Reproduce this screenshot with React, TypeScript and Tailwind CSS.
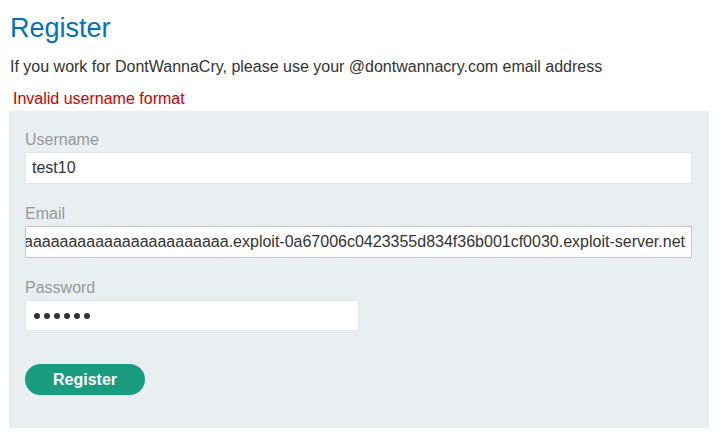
import React from 'react'

const emailValue =
  'aaaaaaaaaaaaaaaaaaaaaaaaaaaaaaaaaaaaaaaaaaaaaaaa.exploit-0a67006c0423355d834f36b001cf0030.exploit-server.net'

const Label = ({ children, className = '' }: { children: React.ReactNode; className?: string }) => (
  <div className={`mb-[2px] text-[16px] leading-[20px] text-[#999] ${className}`}>{children}</div>
)

const App = () => {
  return (
    <div className="min-h-screen bg-white pl-[10px] font-['Liberation_Sans',Arial,sans-serif] text-[#333]">
      <h1 className="pt-[13px] text-[27px] leading-[31px] font-normal text-[#0071bc]">Register</h1>
      <p className="mt-[13px] text-[16px] leading-[20px]">
        If you work for DontWannaCry, please use your @dontwannacry.com email address
      </p>
      <p className="ml-[3px] mt-[12px] text-[16px] leading-[20px] text-[#c00]">Invalid username format</p>

      {/* Form panel */}
      <form className="-ml-px mt-[2px] w-[700px] bg-[#e9eef1] pt-[19px] pr-[17px] pb-[33px] pl-[16px]">
        <Label>Username</Label>
        <input
          readOnly
          value="test10"
          className="block h-[32px] w-full border border-[#e3e6e8] bg-white pl-[6px] text-[16px] text-[#333] outline-none"
        />

        <Label className="mt-[20px]">Email</Label>
        <div className="flex h-[32px] w-full items-center justify-end overflow-hidden whitespace-nowrap border border-[#c6c9cb] bg-white pr-[6px] text-[16px]">
          {emailValue}
        </div>

        <Label className="mt-[20px]">Password</Label>
        <div className="flex h-[31px] w-1/2 items-center gap-[4px] border border-[#e3e6e8] bg-white pl-[8px]">
          {[0, 1, 2, 3, 4, 5].map((i) => (
            <span key={i} className="h-[6px] w-[6px] rounded-full bg-[#333]" />
          ))}
        </div>

        <button
          type="button"
          className="mt-[33px] block h-[31px] w-[120px] rounded-full bg-[#1a9c80] text-[16px] font-bold text-white"
        >
          Register
        </button>
      </form>
    </div>
  )
}

export default App
